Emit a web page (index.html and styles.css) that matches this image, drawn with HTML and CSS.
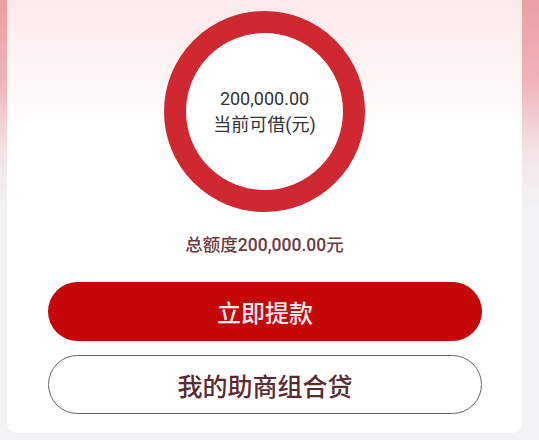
FILE: index.html
```html
<!DOCTYPE html>
<html lang="zh-CN">
<head>
<meta charset="utf-8">
<link rel="stylesheet" href="styles.css">
</head>
<body>
<div class="page">
  <div class="card">
    <div class="ring">
      <div class="amount">200,000.00</div>
      <div class="label">当前可借(元)</div>
    </div>
    <div class="total">总额度200,000.00元</div>
    <div class="btn btn-primary">立即提款</div>
    <div class="btn btn-outline">我的助商组合贷</div>
  </div>
</div>
</body>
</html>
```

FILE: styles.css
```css
html, body {
  margin: 0;
  padding: 0;
}
body {
  width: 539px;
  height: 440px;
  overflow: hidden;
  font-family: Roboto, "Noto Sans CJK SC", sans-serif;
  background: linear-gradient(to bottom, #eb9fa6 0px, #f0b3b8 80px, #f3e3e5 150px, #f3f3f5 210px, #f3f3f5 440px);
}
.page {
  padding: 0 17px 0 7px;
}
.card {
  background: linear-gradient(to bottom, #fde9ea 0px, #fef3f3 60px, #ffffff 130px, #ffffff 100%);
  border-radius: 0 0 10px 10px;
  padding: 11px 0 19px;
  display: flex;
  flex-direction: column;
  align-items: center;
}
.ring {
  box-sizing: border-box;
  width: 201px;
  height: 201px;
  border: 22px solid #cf2830;
  border-radius: 50%;
  background: #ffffff;
  display: flex;
  flex-direction: column;
  align-items: center;
  justify-content: center;
  color: #333333;
  font-size: 18px;
  line-height: 26px;
}
.total {
  margin-top: 21px;
  font-size: 17.5px;
  line-height: 24px;
  color: #6e3a40;
  font-weight: 500;
}
.btn {
  box-sizing: border-box;
  width: 434px;
  height: 59px;
  border-radius: 30px;
  display: flex;
  align-items: center;
  justify-content: center;
  margin-left: 1px;
  font-weight: 500;
}
.btn-primary {
  margin-top: 25px;
  background: #c40707;
  color: #fbeaea;
  font-size: 24px;
}
.btn-outline {
  margin-top: 14px;
  background: #ffffff;
  border: 1.5px solid #6a6264;
  color: #5c2a31;
  font-size: 25px;
}
```
